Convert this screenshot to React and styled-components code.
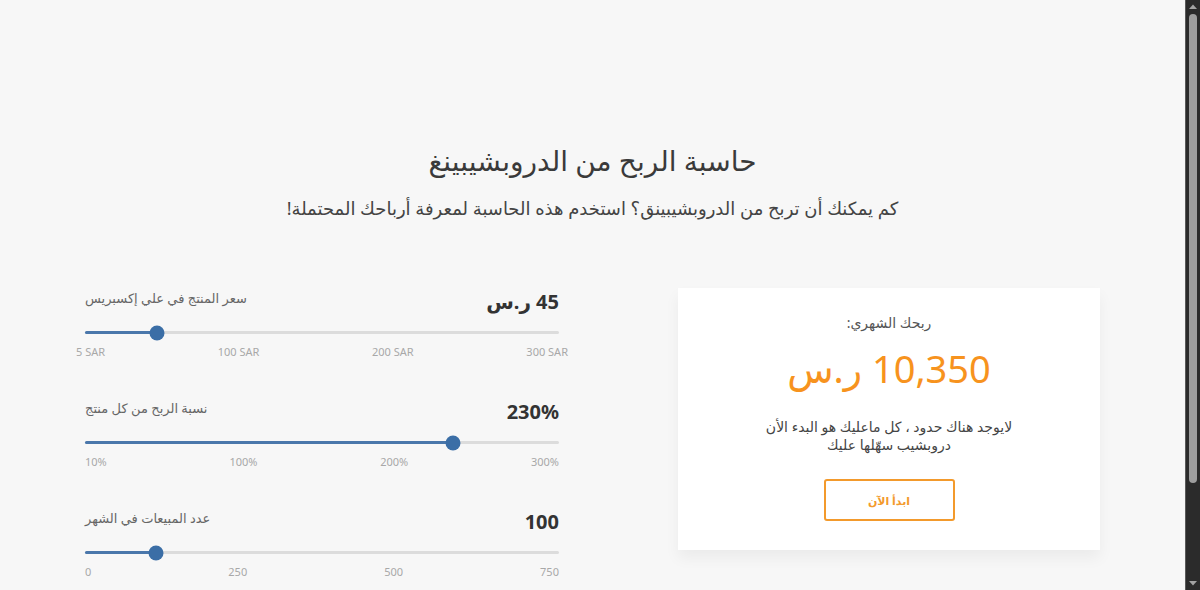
import React from 'react'
import styled, { createGlobalStyle } from 'styled-components'

const GlobalStyle = createGlobalStyle`
  html, body {
    margin: 0;
    height: 100%;
    overflow: hidden;
  }
  body {
    background: #f7f7f7;
    color: #333;
    font-family: "Noto Sans", "DejaVu Sans", sans-serif;
  }
`

const sliders = [
    { label: 'سعر المنتج في علي إكسبريس', value: '45 ر.س', pct: 15.2, ticks: ['5 SAR', '100 SAR', '200 SAR', '300 SAR'], bleed: 9 },
    { label: 'نسبة الربح من كل منتج', value: '230%', pct: 77.6, ticks: ['10%', '100%', '200%', '300%'], bleed: 0 },
    { label: 'عدد المبيعات في الشهر', value: '100', pct: 15, ticks: ['0', '250', '500', '750'], bleed: 0 },
]

function Slider({ item }) {
    return (
        <Block>
            <Head>
                <Label dir="rtl">{item.label}</Label>
                <Value dir="rtl">{item.value}</Value>
            </Head>
            <Track>
                <Fill style={{ width: item.pct + '%' }} />
                <Thumb style={{ left: item.pct + '%' }} />
            </Track>
            <Ticks bleed={item.bleed}>
                {item.ticks.map((t) => (
                    <span key={t}>{t}</span>
                ))}
            </Ticks>
        </Block>
    )
}

function App() {
    return (
        <Window>
            <GlobalStyle />
            <Page>
                <Header>
                    <Title dir="rtl">حاسبة الربح من الدروبشيبينغ</Title>
                    <Sub dir="rtl">كم يمكنك أن تربح من الدروبشيبينق؟ استخدم هذه الحاسبة لمعرفة أرباحك المحتملة!</Sub>
                </Header>
                <Main>
                    <Controls>
                        {sliders.map((s) => (
                            <Slider key={s.label} item={s} />
                        ))}
                    </Controls>
                    <Card>
                        <CardLabel dir="rtl">ربحك الشهري:</CardLabel>
                        <Amount dir="rtl">10,350 ر.س</Amount>
                        <Note dir="rtl">
                            لايوجد هناك حدود ، كل ماعليك هو البدء الأن
                            <br />
                            دروبشيب سهّلها عليك
                        </Note>
                        <StartButton dir="rtl">ابدأ الآن</StartButton>
                    </Card>
                </Main>
            </Page>
            <ScrollRail>
                <Arrow viewBox="0 0 14 13">
                    <path d="M3 9 L7 4.5 L11 9 Z" fill="#a3a3a3" />
                </Arrow>
                <ScrollThumb />
                <Arrow viewBox="0 0 14 13">
                    <path d="M3 4 L7 8.5 L11 4 Z" fill="#a3a3a3" />
                </Arrow>
            </ScrollRail>
        </Window>
    )
}

export default App

const Window = styled.div`
    display: flex;
    height: 100vh;
    background: #f7f7f7;
`

const Page = styled.div`
    flex: 1;
    min-width: 0;
    box-sizing: border-box;
    padding-top: 140px;
`

const ScrollRail = styled.div`
    width: 14px;
    flex-shrink: 0;
    display: flex;
    flex-direction: column;
    justify-content: space-between;
    background: #2b2b2b;
    border-left: 1px solid #5a5a5a;
`

const Arrow = styled.svg`
    width: 14px;
    height: 13px;
    flex-shrink: 0;
`

const ScrollThumb = styled.div`
    margin: 1px 3px auto 3px;
    height: 469px;
    border-radius: 4px;
    background: #9e9e9e;
`

const Header = styled.header`
    text-align: center;
`

const Title = styled.h1`
    margin: 0;
    font-size: 28px;
    line-height: 40px;
    font-weight: 400;
    color: #3a3a3a;
`

const Sub = styled.p`
    margin: 12px 0 0;
    font-size: 18px;
    line-height: 32px;
    color: #444;
`

const Main = styled.main`
    width: 1015px;
    margin: 64px auto 0;
    display: grid;
    grid-template-columns: 474px 422px;
    justify-content: space-between;
    align-items: start;
`

const Controls = styled.div`
    display: flex;
    flex-direction: column;
    gap: 39px;
`

const Block = styled.div`
    display: flex;
    flex-direction: column;
`

const Head = styled.div`
    display: flex;
    justify-content: space-between;
    align-items: flex-start;
`

const Label = styled.span`
    font-size: 13px;
    line-height: 20px;
    color: #666;
`

const Value = styled.span`
    font-size: 20px;
    line-height: 28px;
    font-weight: 700;
    color: #333;
`

const Track = styled.div`
    position: relative;
    height: 3px;
    margin: 15px 0 11px;
    background: #dcdcdc;
    border-radius: 2px;
`

const Fill = styled.div`
    height: 100%;
    background: #4a77ab;
    border-radius: 2px;
`

const Thumb = styled.div`
    position: absolute;
    top: 50%;
    width: 15px;
    height: 15px;
    border-radius: 50%;
    background: #3b6ea6;
    transform: translate(-50%, -50%);
`

const Ticks = styled.div`
    display: flex;
    justify-content: space-between;
    margin: 0 -${(p) => p.bleed}px;
    font-size: 11px;
    line-height: 14px;
    color: #a8a8a8;
`

const Card = styled.section`
    background: #fff;
    box-shadow: 0 8px 14px rgba(0, 0, 0, 0.05);
    padding: 25px 20px 29px;
    display: flex;
    flex-direction: column;
    align-items: center;
    text-align: center;
`

const CardLabel = styled.div`
    font-size: 14px;
    line-height: 20px;
    color: #555;
`

const Amount = styled.div`
    margin-top: 10px;
    font-size: 38px;
    line-height: 50px;
    color: #f7931e;
`

const Note = styled.p`
    margin: 25px 0 0;
    font-size: 14px;
    line-height: 18px;
    color: #444;
`

const StartButton = styled.button`
    margin-top: 25px;
    width: 131px;
    height: 42px;
    background: transparent;
    border: 2px solid #f39a2c;
    border-radius: 3px;
    color: #f39a2c;
    font-family: inherit;
    font-size: 11px;
    font-weight: 700;
    cursor: pointer;
`
